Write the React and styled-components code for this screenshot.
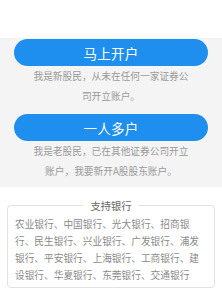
import styled, { createGlobalStyle } from 'styled-components'

const GlobalStyle = createGlobalStyle`
	body {
		margin: 0;
		background: #ffffff;
		font-family: "Noto Sans CJK SC", "Noto Sans", sans-serif;
	}
`
const Page = styled.div`
	width: 222px;
	height: 294px;
	display: flex;
	flex-direction: column;
	overflow: hidden;
`
const TopSpace = styled.div`
	height: 38px;
	background: #ffffff;
`
const Options = styled.div`
	background: #f4f4f4;
	padding: 1px 14px 6px 14px;
	display: flex;
	flex-direction: column;
`
const Option = styled.div`
	display: flex;
	flex-direction: column;
	align-items: center;
	margin-top: ${props => props.gap || 0}px;
`
const Button = styled.div`
	width: 100%;
	height: 27px;
	border-radius: 14px;
	background: #1e8fef;
	color: #ffffff;
	font-size: 13.5px;
	display: flex;
	align-items: center;
	justify-content: center;
	letter-spacing: 0.2px;
`
const Desc = styled.p`
	margin: 0;
	width: 160px;
	text-align: center;
	font-size: 9.7px;
	line-height: 20px;
	color: #9a9a9a;
`
const Banks = styled.div`
	flex: 1;
	background: #ffffff;
	padding: 18px 7px 0 7px;
`
const Box = styled.div`
	position: relative;
	border: 1px solid #e2e2e2;
	border-radius: 4px;
	padding: 10px 7px 5px 7px;
	height: 83px;
	box-sizing: border-box;
`
const Title = styled.div`
	position: absolute;
	top: -8px;
	left: 50%;
	transform: translateX(-50%);
	background: #ffffff;
	padding: 0 7px;
	font-size: 10.3px;
	line-height: 15px;
	color: #666666;
	white-space: nowrap;
`
const BankList = styled.p`
	margin: 0;
	font-size: 9.7px;
	line-height: 17px;
	color: #8a8a8a;
`

export default function App() {
	return (
		<Page>
			<GlobalStyle />
			<TopSpace />
			<Options>
				<Option>
					<Button>马上开户</Button>
					<Desc>我是新股民，从未在任何一家证券公司开立账户。</Desc>
				</Option>
				<Option gap={8}>
					<Button>一人多户</Button>
					<Desc>我是老股民，已在其他证券公司开立账户，我要新开A股股东账户。</Desc>
				</Option>
			</Options>
			<Banks>
				<Box>
					<Title>支持银行</Title>
					<BankList>
						农业银行、中国银行、光大银行、招商银行、民生银行、兴业银行、广发银行、浦发银行、平安银行、上海银行、工商银行、建设银行、华夏银行、东莞银行、交通银行
					</BankList>
				</Box>
			</Banks>
		</Page>
	)
}
